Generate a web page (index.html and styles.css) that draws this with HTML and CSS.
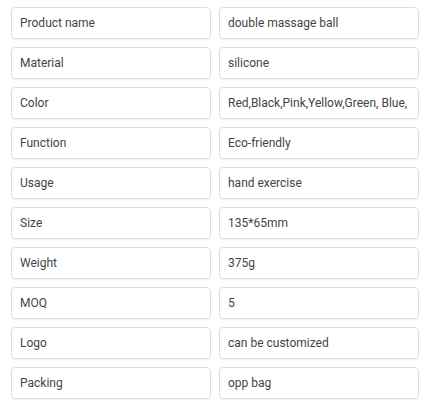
FILE: index.html
```html
<!DOCTYPE html>
<html>
<head>
<meta charset="utf-8">
<link rel="stylesheet" href="styles.css">
</head>
<body>
<div class="specs">
  <div class="cell">Product name</div><div class="cell">double massage ball</div>
  <div class="cell">Material</div><div class="cell">silicone</div>
  <div class="cell">Color</div><div class="cell">Red,Black,Pink,Yellow,Green, Blue,</div>
  <div class="cell">Function</div><div class="cell">Eco-friendly</div>
  <div class="cell">Usage</div><div class="cell">hand exercise</div>
  <div class="cell">Size</div><div class="cell">135*65mm</div>
  <div class="cell">Weight</div><div class="cell">375g</div>
  <div class="cell">MOQ</div><div class="cell">5</div>
  <div class="cell">Logo</div><div class="cell">can be customized</div>
  <div class="cell">Packing</div><div class="cell">opp bag</div>
</div>
</body>
</html>
```
FILE: styles.css
```css
html, body {
  margin: 0;
  padding: 0;
  background: #fff;
}
.specs {
  display: grid;
  grid-template-columns: 200px 200px;
  column-gap: 8px;
  row-gap: 8px;
  padding: 7px 11px;
}
.cell {
  box-sizing: border-box;
  height: 32px;
  border: 1px solid #dcdcdc;
  border-radius: 4px;
  padding: 0 8px;
  display: flex;
  align-items: center;
  font-family: Roboto, "Liberation Sans", sans-serif;
  font-size: 12px;
  color: #444;
  white-space: nowrap;
  overflow: hidden;
  box-shadow: 0 1px 1px rgba(0,0,0,0.04);
}
```
